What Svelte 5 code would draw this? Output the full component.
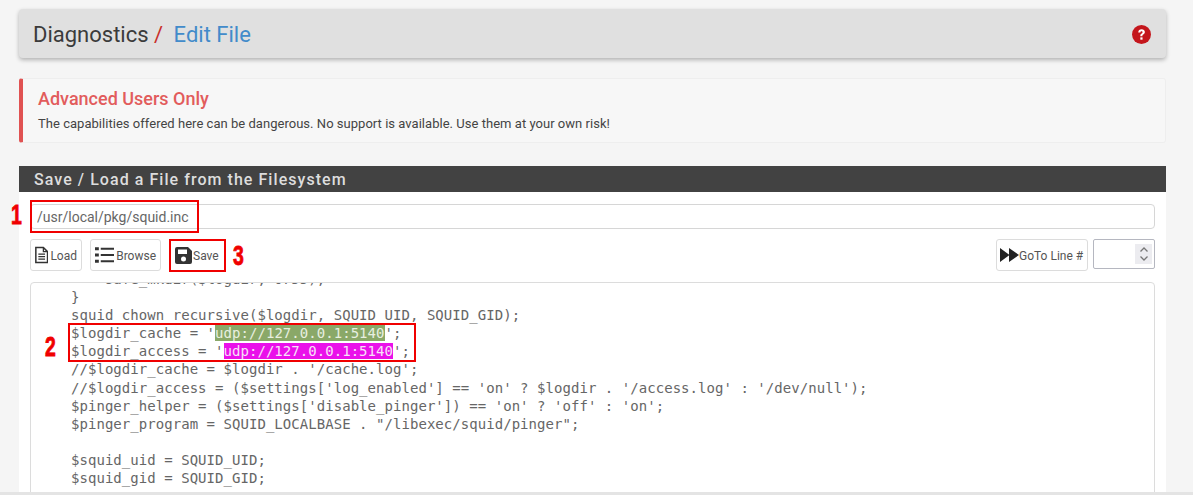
<script>
  const lines = [
    { t: "    safe_mkdir($logdir, 0755);" },
    { t: "}" },
    { t: "squid_chown_recursive($logdir, SQUID_UID, SQUID_GID);" },
    { t: "$logdir_cache = '", h: "udp://127.0.0.1:5140", c: "green", e: "';" },
    { t: "$logdir_access = '", h: "udp://127.0.0.1:5140", c: "pink", e: "';" },
    { t: "//$logdir_cache = $logdir . '/cache.log';" },
    { t: "//$logdir_access = ($settings['log_enabled'] == 'on' ? $logdir . '/access.log' : '/dev/null');" },
    { t: "$pinger_helper = ($settings['disable_pinger']) == 'on' ? 'off' : 'on';" },
    { t: '$pinger_program = SQUID_LOCALBASE . "/libexec/squid/pinger";' },
    { t: " " },
    { t: "$squid_uid = SQUID_UID;" },
    { t: "$squid_gid = SQUID_GID;" }
  ];
</script>

<div class="page">
  <header class="title">
    <h1>Diagnostics <span class="sep">/</span> <span class="cur">Edit File</span></h1>
    <svg class="help" viewBox="0 0 18 18" width="19" height="19" aria-label="help">
      <circle cx="9" cy="9" r="9" fill="#c4161c" />
      <path d="M5.900 7c.1-1.900 1.400-3 3.200-3 1.800 0 3.100 1.100 3.100 2.700 0 1.200-.7 1.800-1.500 2.300-.6.400-.8.600-.8 1.200v.4H7.900v-.6c0-1 .4-1.500 1.200-2 .6-.4.900-.7.900-1.200 0-.5-.4-.9-1-.9-.6 0-1 .4-1.100 1.100z" fill="#fff" />
      <rect x="7.900" y="11.700" width="2.100" height="2.200" fill="#fff" />
    </svg>
  </header>

  <section class="alert">
    <h4>Advanced Users Only</h4>
    <p>The capabilities offered here can be dangerous. No support is available. Use them at your own risk!</p>
  </section>

  <section class="panel">
    <div class="panel-head">Save / Load a File from the Filesystem</div>
    <div class="panel-body">
      <div class="mark-wrap">
        <input class="path" type="text" value="/usr/local/pkg/squid.inc" readonly />
        <span class="box box1"></span>
        <span class="num n1">1</span>
      </div>
      <div class="tools">
        <button class="btn">
          <svg viewBox="0 0 16 20" width="16" height="20">
            <path d="M1 1h9l5 5v13H1z" fill="none" stroke="#333" stroke-width="1.800" />
            <path d="M10 1v5h5" fill="none" stroke="#333" stroke-width="1.500" />
            <path d="M4 9h8M4 12h8M4 15h8" stroke="#333" stroke-width="1.500" />
          </svg>
          <span>Load</span>
        </button>
        <button class="btn">
          <svg viewBox="0 0 20 18" width="20" height="18">
            <path d="M0 1h4v3H0zM0 7.500h4v3H0zM0 14h4v3H0z" fill="#333" />
            <path d="M6 1.500h14v2H6zM6 8h14v2H6zM6 14.500h14v2H6z" fill="#333" />
          </svg>
          <span>Browse</span>
        </button>
        <button class="btn save">
          <svg viewBox="0 0 17 17" width="17" height="17">
            <path fill-rule="evenodd" d="M2 0h11l4 4v11a2 2 0 0 1-2 2H2a2 2 0 0 1-2-2V2a2 2 0 0 1 2-2zM3 2.500v4.500h9V2.500zM8.500 9.500a2.500 2.500 0 1 0 0 5 2.500 2.500 0 0 0 0-5z" fill="#333" />
          </svg>
          <span>Save</span>
          <span class="box box3"></span>
          <span class="num n3">3</span>
        </button>
        <div class="spacer"></div>
        <button class="btn goto">
          <svg viewBox="0 0 19 14" width="19" height="14">
            <path d="M0 0l9.500 7L0 14zM9 0l10 7-10 7z" fill="#222" />
          </svg>
          <span>GoTo Line #</span>
        </button>
        <div class="spin">
          <span class="arrows">
            <svg viewBox="0 0 10 18" width="10" height="18">
              <path d="M1.500 6.500L5 3l3.500 3.500M1.500 11.500L5 15l3.500-3.500" fill="none" stroke="#777" stroke-width="1.300" />
            </svg>
          </span>
        </div>
      </div>
      <div class="code-wrap">
        <div class="code">
          {#each lines as l}
            <div class="ln">{l.t}{#if l.h}<span class={l.c}>{l.h}</span>{l.e}{/if}</div>
          {/each}
        </div>
        <span class="box box2"></span>
        <span class="num n2">2</span>
      </div>
    </div>
  </section>
</div>

<style>
  :global(body) {
    margin: 0;
    background: #f5f5f5;
    font-family: Roboto, "Liberation Sans", sans-serif;
  }
  .page {
    width: 1193px;
    height: 495px;
    box-sizing: border-box;
    padding: 9px 27px 0 19px;
    overflow: hidden;
    position: relative;
  }
  .page::after {
    content: "";
    position: absolute;
    left: 0;
    right: 0;
    bottom: 0;
    height: 3px;
    background: #e4e4e4;
  }
  .title {
    height: 49px;
    background: #e0e0e0;
    border-radius: 4px;
    box-shadow: 0 2px 4px rgba(0, 0, 0, 0.28);
    display: flex;
    align-items: center;
    justify-content: space-between;
    padding: 1px 15px 0 14px;
    box-sizing: border-box;
  }
  h1 {
    margin: 0;
    font-size: 22px;
    font-weight: 400;
    color: #3b3b3b;
    white-space: pre;
  }
  .sep { color: #c9302c; }
  .cur { color: #428bca; margin-left: 5px; }
  .help { display: block; }
  .alert {
    margin-top: 20px;
    height: 65px;
    box-sizing: border-box;
    background: #f7f7f7;
    border: 1px solid #eeeeee;
    border-left: 4px solid #e05252;
    border-radius: 3px;
    padding: 10px 15px;
  }
  h4 {
    margin: 0;
    font-size: 18px;
    line-height: 20px;
    font-weight: 500;
    color: #e25c5c;
  }
  .alert p {
    margin: 7px 0 0;
    font-size: 13px;
    line-height: 16px;
    letter-spacing: 0.03px;
    color: #444;
  }
  .panel {
    margin-top: 23px;
    background: #fff;
    height: 400px;
  }
  .panel-head {
    height: 26px;
    line-height: 27px;
    background: #424242;
    color: #dddddd;
    font-size: 16px;
    font-weight: 500;
    letter-spacing: 1.05px;
    padding-left: 15px;
  }
  .panel-body {
    padding: 12px 11px 0 11px;
  }
  .mark-wrap { position: relative; }
  .path {
    display: block;
    width: 100%;
    height: 25px;
    box-sizing: border-box;
    border: 1px solid #d6d6d6;
    border-radius: 4px;
    padding: 0 6px;
    font: 400 14px Roboto, sans-serif;
    color: #666;
    background: #fff;
    outline: none;
  }
  .box {
    position: absolute;
    border: 2px solid #f00000;
    box-sizing: border-box;
    pointer-events: none;
  }
  .num {
    position: absolute;
    color: #f00000;
    font: 700 27px/28px "Liberation Sans", sans-serif;
    transform: scaleX(0.72);
    transform-origin: left top;
    -webkit-text-stroke: 0.8px #f00000;
  }
  .box1 { left: 0; top: -4px; width: 169px; height: 33px; }
  .n1 { left: -19px; top: -3px; }
  .tools {
    margin-top: 10px;
    display: flex;
    align-items: flex-start;
    height: 33px;
    gap: 8px;
  }
  .btn {
    position: relative;
    height: 32px;
    display: flex;
    align-items: center;
    gap: 2px;
    border: 1px solid #dcdcdc;
    border-radius: 3px;
    background: #fff;
    padding: 0 4px;
    font: 400 12px Roboto, sans-serif;
    color: #555;
  }
  .btn:first-child { width: 52px; }
  .btn:nth-child(2) { width: 71px; }
  .btn span:not(.box):not(.num) { position: relative; top: 1px; }
  .save {
    width: 57px;
    border-color: transparent;
    margin-left: 0;
    padding-left: 5px;
    gap: 1px;
  }
  .box3 { left: -1px; top: -1px; width: 57px; height: 33px; }
  .n3 { left: 63px; top: 2px; }
  .spacer { flex: 1; }
  .goto {
    width: 92px;
    gap: 0;
    padding: 0 0 0 3px;
    margin-right: -3px;
  }
  .spin {
    width: 62px;
    height: 30px;
    box-sizing: border-box;
    border: 1px solid #b5b7c0;
    border-radius: 2px;
    background: #fff;
    display: flex;
    justify-content: flex-end;
    align-items: center;
    padding-right: 2px;
  }
  .arrows {
    width: 17px;
    height: 20px;
    background: #ececf0;
    display: flex;
    align-items: center;
    justify-content: center;
  }
  .code-wrap {
    position: relative;
    margin-top: 10px;
    height: 228px;
    border: 1px solid #dcdcdc;
    border-radius: 4px 4px 0 0;
    box-sizing: border-box;
  }
  .code {
    height: 100%;
    overflow: hidden;
    font: 14px/18.1px "DejaVu Sans Mono", monospace;
    letter-spacing: 0.045px;
    color: #666;
    padding-left: 40px;
    position: relative;
  }
  .code .ln {
    white-space: pre;
    height: 18.1px;
    position: relative;
    top: -13px;
  }
  .green { background: #8aa868; color: #e8efe0; }
  .pink { background: #ea10ea; color: #f8e0f8; }
  .box2 { left: 37px; top: 40px; width: 348px; height: 39px; }
  .n2 { left: 14px; top: 50px; }
</style>
